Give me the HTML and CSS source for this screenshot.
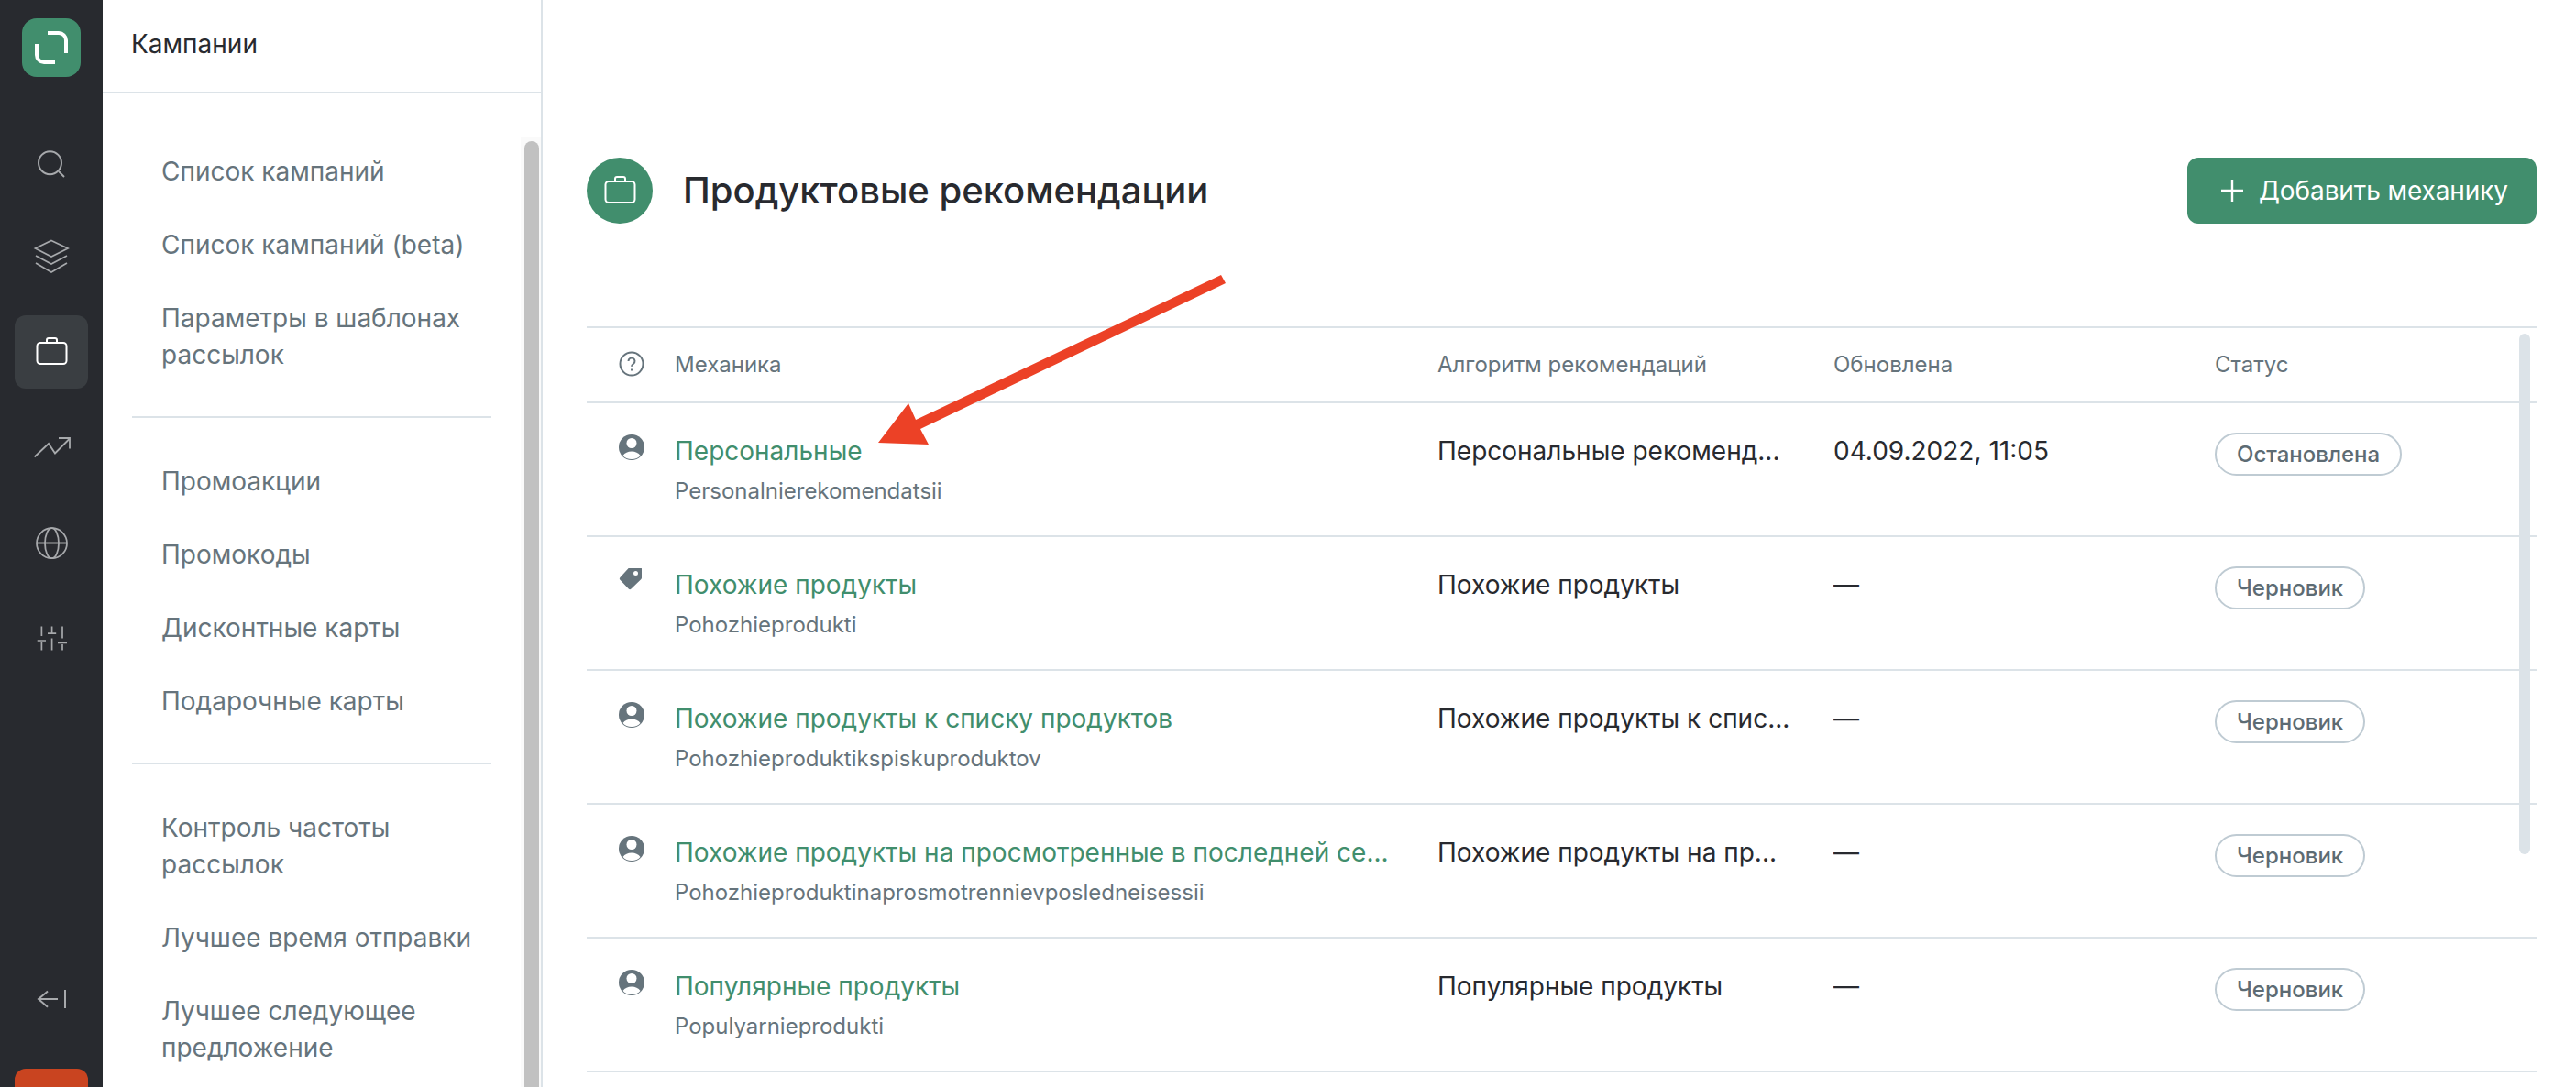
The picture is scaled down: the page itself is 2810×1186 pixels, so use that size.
FILE: index.html
```html
<!DOCTYPE html>
<html lang="ru">
<head>
    <meta charset="UTF-8">
    <title>Продуктовые рекомендации</title>
    <link rel="stylesheet" href="styles.css">
</head>
<body>

    <aside class="rail">
        <div class="logo">
            <svg width="64" height="64" viewBox="0 0 64 64" fill="none" stroke="#fff" stroke-width="4">
                <path d="M28 16H40a8 8 0 0 1 8 8V38"/>
                <path d="M16 28V40a8 8 0 0 0 8 8H36"/>
            </svg>
        </div>
        <nav class="rail-nav">
            <a class="rail-item">
                <svg width="44" height="40" viewBox="-2 0 44 40" fill="none" stroke="#a7a9ac" stroke-width="2">
                    <circle cx="18.5" cy="21.7" r="12.5"/><path d="M28 31l6 6"/>
                </svg>
            </a>
            <a class="rail-item">
                <svg width="44" height="40" viewBox="-2 0 44 40" fill="none" stroke="#a7a9ac" stroke-width="1.7">
                    <path d="M20 2.5L38 11 20 20 2.5 11z"/><path d="M3 19l17 9 17-9"/><path d="M3 27l17 10 17-10"/>
                </svg>
            </a>
            <a class="rail-item active">
                <svg width="44" height="40" viewBox="-2 0 44 40" fill="none" stroke="#fff" stroke-width="2">
                    <rect x="4.5" y="10" width="32" height="23" rx="3.5"/><path d="M15 10V7a2 2 0 0 1 2-2h7a2 2 0 0 1 2 2v3"/>
                </svg>
            </a>
            <a class="rail-item">
                <svg width="44" height="40" viewBox="0 0 44 40" fill="none" stroke="#a7a9ac" stroke-width="1.8">
                    <path d="M3.6 30.5L19 16l7 10.5L42 10.5"/><path d="M30 10H42V21.5"/>
                </svg>
            </a>
            <a class="rail-item">
                <svg width="44" height="40" viewBox="-2 0 44 40" fill="none" stroke="#a7a9ac" stroke-width="1.8">
                    <circle cx="20.5" cy="20.7" r="16.5"/><ellipse cx="20.5" cy="20.7" rx="7.5" ry="16.5"/><path d="M4 20.5H37"/>
                </svg>
            </a>
            <a class="rail-item">
                <svg width="44" height="40" viewBox="-2 0 44 40" fill="none" stroke="#a7a9ac" stroke-width="1.7">
                    <path d="M9.4 7.5V18M9.4 24V33.5M4.7 23H14"/>
                    <path d="M20.6 7.5V15M20.6 20.5V33.5M16 15.2H25.2"/>
                    <path d="M32 7.5V20.5M32 27V33.5M27 25.5H37"/>
                </svg>
            </a>
        </nav>
        <a class="rail-item rail-collapse">
            <svg width="44" height="40" viewBox="-2 0 44 40" fill="none" stroke="#a7a9ac" stroke-width="2">
                <path d="M6 20H27M16 11.5L6 20l10 8.7M35 10V30"/>
            </svg>
        </a>
        <div class="rail-user"></div>
    </aside>

    <aside class="panel">
        <div class="panel-title">Кампании</div>
        <div class="panel-body">
            <div class="menu">
                <div class="menu-group">
                    <a>Список кампаний</a>
                    <a>Список кампаний (beta)</a>
                    <a>Параметры в шаблонах рассылок</a>
                </div>
                <div class="menu-group">
                    <a>Промоакции</a>
                    <a>Промокоды</a>
                    <a>Дисконтные карты</a>
                    <a>Подарочные карты</a>
                </div>
                <div class="menu-group">
                    <a>Контроль частоты рассылок</a>
                    <a>Лучшее время отправки</a>
                    <a>Лучшее следующее предложение</a>
                </div>
            </div>
            <div class="menu-track"><div class="menu-thumb"></div></div>
        </div>
    </aside>

    <main class="content">
        <div class="page-head">
            <div class="page-icon">
                <svg width="44" height="40" viewBox="-2 0 44 40" fill="none" stroke="#fff" stroke-width="2">
                    <rect x="4.5" y="10" width="32" height="23" rx="3.5"/><path d="M15 10V7a2 2 0 0 1 2-2h7a2 2 0 0 1 2 2v3"/>
                </svg>
            </div>
            <h1>Продуктовые рекомендации</h1>
            <button class="add-btn">
                <svg width="24" height="24" viewBox="0 0 24 24" fill="none" stroke="#fff" stroke-width="2.4"><path d="M12 0V24M0 12H24"/></svg>
                Добавить механику
            </button>
        </div>

        <div class="table">
            <div class="row head">
                <div class="cell-icon">
                    <svg width="28" height="28" viewBox="0 0 28 28" fill="none" stroke="#66747c" stroke-width="2">
                        <circle cx="14" cy="14" r="12.5"/>
                        <path d="M10.5 11a3.5 3.5 0 1 1 5.6 2.8c-1.300 1-2.100 1.500-2.100 3"/>
                        <path d="M14 19.500v2"/>
                    </svg>
                </div>
                <div>Механика</div>
                <div>Алгоритм рекомендаций</div>
                <div>Обновлена</div>
                <div>Статус</div>
            </div>

            <div class="row">
                <div class="cell-icon">
                    <svg class="type-icon" width="28" height="28" viewBox="0 0 28 28"><circle cx="14" cy="14" r="14" fill="#66747c"/><circle cx="14" cy="9.500" r="5.500" fill="#fff"/><path d="M4.500 23c2-3 5.500-4.500 9.500-4.500s7.500 1.500 9.500 4.500c-2 2.500-5.500 4-9.500 4s-7.500-1.500-9.500-4z" fill="#fff"/></svg>
                </div>
                <div>
                    <a class="name">Персональные</a>
                    <div class="code">Personalnierekomendatsii</div>
                </div>
                <div>Персональные рекоменд...</div>
                <div>04.09.2022, 11:05</div>
                <div><span class="pill">Остановлена</span></div>
            </div>

            <div class="row">
                <div class="cell-icon">
                    <svg class="type-icon" width="28" height="28" viewBox="0 0 28 28"><path fill-rule="evenodd" d="M12.500 -1H23a2 2 0 0 1 2 2V10.500a2 2 0 0 1-.6 1.400L13.500 22.500a2 2 0 0 1-2.800 0L1.500 12.800a2 2 0 0 1 0-2.800L11 -.4a2 2 0 0 1 1.500-.6zM18.500 3a2.500 2.500 0 1 0 0 5 2.500 2.500 0 0 0 0-5z" fill="#66747c"/></svg>
                </div>
                <div>
                    <a class="name">Похожие продукты</a>
                    <div class="code">Pohozhieprodukti</div>
                </div>
                <div>Похожие продукты</div>
                <div>—</div>
                <div><span class="pill">Черновик</span></div>
            </div>

            <div class="row">
                <div class="cell-icon">
                    <svg class="type-icon" width="28" height="28" viewBox="0 0 28 28"><circle cx="14" cy="14" r="14" fill="#66747c"/><circle cx="14" cy="9.500" r="5.500" fill="#fff"/><path d="M4.500 23c2-3 5.500-4.500 9.500-4.500s7.500 1.500 9.500 4.500c-2 2.500-5.500 4-9.500 4s-7.500-1.500-9.500-4z" fill="#fff"/></svg>
                </div>
                <div>
                    <a class="name">Похожие продукты к списку продуктов</a>
                    <div class="code">Pohozhieproduktikspiskuproduktov</div>
                </div>
                <div>Похожие продукты к спис...</div>
                <div>—</div>
                <div><span class="pill">Черновик</span></div>
            </div>

            <div class="row">
                <div class="cell-icon">
                    <svg class="type-icon" width="28" height="28" viewBox="0 0 28 28"><circle cx="14" cy="14" r="14" fill="#66747c"/><circle cx="14" cy="9.500" r="5.500" fill="#fff"/><path d="M4.500 23c2-3 5.500-4.500 9.500-4.500s7.500 1.500 9.500 4.500c-2 2.500-5.500 4-9.500 4s-7.500-1.500-9.500-4z" fill="#fff"/></svg>
                </div>
                <div>
                    <a class="name">Похожие продукты на просмотренные в последней се...</a>
                    <div class="code">Pohozhieproduktinaprosmotrennievposledneisessii</div>
                </div>
                <div>Похожие продукты на пр...</div>
                <div>—</div>
                <div><span class="pill">Черновик</span></div>
            </div>

            <div class="row">
                <div class="cell-icon">
                    <svg class="type-icon" width="28" height="28" viewBox="0 0 28 28"><circle cx="14" cy="14" r="14" fill="#66747c"/><circle cx="14" cy="9.500" r="5.500" fill="#fff"/><path d="M4.500 23c2-3 5.500-4.500 9.500-4.500s7.500 1.500 9.500 4.500c-2 2.500-5.500 4-9.500 4s-7.500-1.500-9.500-4z" fill="#fff"/></svg>
                </div>
                <div>
                    <a class="name">Популярные продукты</a>
                    <div class="code">Populyarnieprodukti</div>
                </div>
                <div>Популярные продукты</div>
                <div>—</div>
                <div><span class="pill">Черновик</span></div>
            </div>

            <div class="table-scroll"></div>
        </div>
    </main>

    <!-- Red arrow drawn over the screenshot -->
    <svg class="arrow" width="2810" height="1186" viewBox="0 0 2810 1186">
        <polygon points="958,483 991,440 999,458 1332,300 1337,309 1004,468 1013,485" fill="#ec4126"/>
    </svg>

</body>
</html>
```

FILE: styles.css
```css
* {
    box-sizing: border-box;
}
body {
    margin: 0;
    height: 1186px;
    overflow: hidden;
    display: flex;
    font-family: Inter, "Noto Sans", sans-serif;
    font-size: 28px;
    line-height: 40px;
    color: #282a2f;
    background-color: #fff;
    position: relative;
}

/* Dark icon rail */
.rail {
    width: 112px;
    height: 1186px;
    flex-shrink: 0;
    background-color: #282a2f;
    padding: 20px 16px 0;
    display: flex;
    flex-direction: column;
    align-items: center;
    overflow: hidden;
}
.logo {
    width: 64px;
    height: 64px;
    border-radius: 16px;
    background-color: #418e6d;
    flex-shrink: 0;
}
.logo svg {
    display: block;
}
.rail-nav {
    margin-top: 52px;
    display: flex;
    flex-direction: column;
    gap: 24px;
}
.rail-item {
    width: 80px;
    height: 80px;
    flex-shrink: 0;
    border-radius: 12px;
    display: flex;
    align-items: center;
    justify-content: center;
}
.rail-item.active {
    background-color: #3a3e42;
}
.rail-collapse {
    margin-top: auto;
}
.rail-user {
    width: 80px;
    height: 80px;
    flex-shrink: 0;
    margin-top: 36px;
    margin-bottom: -60px;
    border-radius: 12px;
    background-color: #c94420;
}

/* Section menu */
.panel {
    width: 480px;
    height: 1186px;
    flex-shrink: 0;
    border-right: 2px solid #dce3e8;
    display: flex;
    flex-direction: column;
}
.panel-title {
    height: 102px;
    flex-shrink: 0;
    padding: 28px 0 0 31px;
    border-bottom: 2px solid #dce3e8;
}
.panel-body {
    flex: 1;
    min-height: 0;
    margin-top: 48px;
    display: flex;
}
.menu {
    width: 456px;
    padding: 0 32px 0 32px;
}
.menu-group {
    display: flex;
    flex-direction: column;
    gap: 40px;
    padding: 49px 0 47px 32px;
    border-bottom: 2px solid #dce3e8;
    color: #66747c;
}
.menu-group:first-child {
    padding-top: 17px;
}
.menu-group:last-child {
    border-bottom: none;
}
.menu-track {
    width: 22px;
    padding: 4px 2px 0 4px;
    background-color: #fafafa;
}
.menu-thumb {
    height: 100%;
    border-radius: 8px 8px 0 0;
    background-color: #c1c1c1;
}

/* Main content */
.content {
    flex: 1;
    min-width: 0;
    padding: 172px 43px 0 48px;
}
.page-head {
    height: 72px;
    display: flex;
    align-items: center;
}
.page-icon {
    width: 72px;
    height: 72px;
    border-radius: 50%;
    background-color: #418e6d;
    display: flex;
    align-items: center;
    justify-content: center;
}
h1 {
    margin: 0 0 0 33px;
    font-size: 40px;
    line-height: 48px;
    font-weight: 500;
}
.add-btn {
    margin-left: auto;
    width: 381px;
    height: 72px;
    padding: 0 0 0 37px;
    display: flex;
    align-items: center;
    gap: 17px;
    border: none;
    border-radius: 12px;
    background-color: #418e6d;
    color: #fff;
    font-family: inherit;
    font-size: 28px;
    letter-spacing: -0.1px;
}

.table {
    margin-top: 112px;
    border-top: 2px solid #dce3e8;
    position: relative;
}
.row {
    display: grid;
    grid-template-columns: 96px 832px 432px 416px 1fr;
    height: 146px;
    padding-top: 32px;
    border-bottom: 2px solid #dce3e8;
    white-space: nowrap;
}
.row.head {
    height: 82px;
    padding-top: 22px;
    font-size: 24px;
    line-height: 36px;
    color: #66747c;
}
.cell-icon {
    padding-left: 35px;
}
.cell-icon svg {
    display: block;
}
.head .cell-icon svg {
    margin-top: 3px;
}
.type-icon {
    margin-top: 2px;
}
.name {
    display: block;
    color: #418e6d;
}
.code {
    margin-top: 6px;
    font-size: 24px;
    line-height: 36px;
    color: #66747c;
}
.pill {
    display: inline-block;
    height: 47px;
    padding: 0 22px;
    border: 2px solid #bfcbd3;
    border-radius: 24px;
    font-size: 24px;
    line-height: 43px;
    font-weight: 500;
    color: #5d6b73;
    vertical-align: top;
}
.table-scroll {
    position: absolute;
    top: 6px;
    left: 2108px;
    width: 12px;
    height: 568px;
    border-radius: 6px;
    background-color: #dce3e8;
}

.arrow {
    position: absolute;
    top: 0;
    left: 0;
    pointer-events: none;
}
```
